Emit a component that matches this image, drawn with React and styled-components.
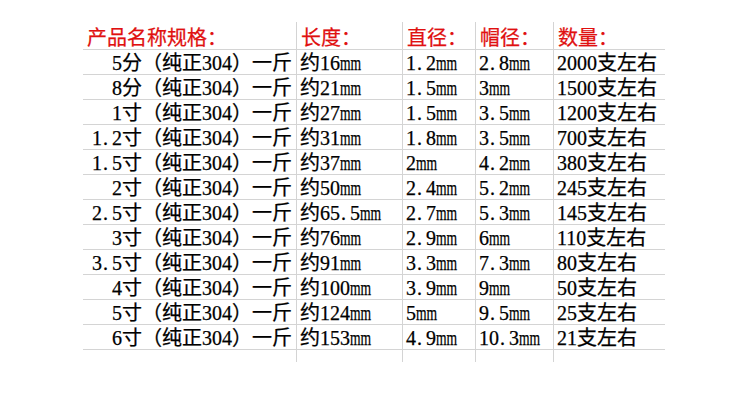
import React from 'react'
import styled, { createGlobalStyle } from 'styled-components'

const GlobalStyle = createGlobalStyle`
    body {
        margin: 0;
        background: #ffffff;
    }
`

const Page = styled.div`
    width: 750px;
    height: 400px;
    padding: 22px 0 0 83px;
    box-sizing: border-box;
    background: #ffffff;
`

const Sheet = styled.div`
    display: grid;
    grid-template-columns: 214px 106px 73px 78px 111px;
    width: 582px;
    font-family: "Liberation Serif", "Noto Sans CJK SC", serif;
    font-size: 20px;
    color: #000000;
    -webkit-text-stroke: 0.25px currentColor;
`

const Cell = styled.div`
    height: ${p => (p.$header ? '28px' : '25px')};
    box-sizing: border-box;
    display: flex;
    align-items: ${p => (p.$header ? 'flex-end' : 'center')};
    justify-content: ${p => (p.$right ? 'flex-end' : 'flex-start')};
    padding: ${p => (p.$header ? '0 0 1px 4px' : p.$right ? '2px 4px 0 0' : '2px 0 0 3px')};
    border-bottom: 1px solid #d4d4d4;
    border-right: ${p => (p.$last ? 'none' : '1px solid #d4d4d4')};
    color: ${p => (p.$header ? '#e01010' : 'inherit')};
    white-space: nowrap;
    line-height: 1;
`

const Tail = styled.div`
    height: 12px;
    border-right: ${p => (p.$last ? 'none' : '1px solid #d4d4d4')};
`

const Unit = styled.span`
    display: inline-block;
    transform: scaleX(0.68);
    transform-origin: left center;
    margin-right: -10px;
`

const Dot = styled.span`
    display: inline-block;
    width: 0.5em;
    padding-left: 1px;
    box-sizing: border-box;
`

const headers = ['产品名称规格：', '长度：', '直径：', '帽径：', '数量：']

const rows = [
    ['5分（纯正304）一斤', '约16mm', '1.2mm', '2.8mm', '2000支左右'],
    ['8分（纯正304）一斤', '约21mm', '1.5mm', '3mm', '1500支左右'],
    ['1寸（纯正304）一斤', '约27mm', '1.5mm', '3.5mm', '1200支左右'],
    ['1.2寸（纯正304）一斤', '约31mm', '1.8mm', '3.5mm', '700支左右'],
    ['1.5寸（纯正304）一斤', '约37mm', '2mm', '4.2mm', '380支左右'],
    ['2寸（纯正304）一斤', '约50mm', '2.4mm', '5.2mm', '245支左右'],
    ['2.5寸（纯正304）一斤', '约65.5mm', '2.7mm', '5.3mm', '145支左右'],
    ['3寸（纯正304）一斤', '约76mm', '2.9mm', '6mm', '110支左右'],
    ['3.5寸（纯正304）一斤', '约91mm', '3.3mm', '7.3mm', '80支左右'],
    ['4寸（纯正304）一斤', '约100mm', '3.9mm', '9mm', '50支左右'],
    ['5寸（纯正304）一斤', '约124mm', '5mm', '9.5mm', '25支左右'],
    ['6寸（纯正304）一斤', '约153mm', '4.9mm', '10.3mm', '21支左右'],
]

// half-width look: widen the dot, squeeze "mm"
const Text = ({ value }) =>
    value
        .split(/(mm|\.)/)
        .filter(Boolean)
        .map((part, i) =>
            part === 'mm' ? <Unit key={i}>mm</Unit> : part === '.' ? <Dot key={i}>.</Dot> : part
        )

const App = () => {
    return (
        <Page>
            <GlobalStyle />
            <Sheet>
                {headers.map((h, i) => (
                    <Cell key={h} $header $last={i === headers.length - 1}>
                        {h}
                    </Cell>
                ))}
                {rows.map(row =>
                    row.map((value, i) => (
                        <Cell key={row[0] + i} $right={i === 0} $last={i === row.length - 1}>
                            <Text value={value} />
                        </Cell>
                    ))
                )}
                {headers.map((h, i) => (
                    <Tail key={'t' + i} $last={i === headers.length - 1} />
                ))}
            </Sheet>
        </Page>
    )
}

export default App
